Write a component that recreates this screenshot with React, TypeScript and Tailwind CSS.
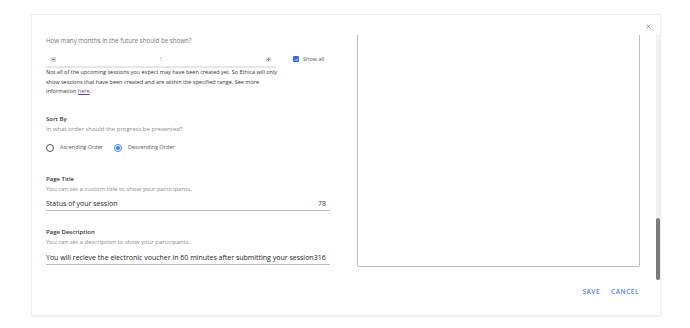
import React from 'react';

const font = { fontFamily: '"Open Sans", "Noto Sans", sans-serif' };

const Radio = ({ checked, label }: { checked?: boolean; label: string }) => (
  <label className="flex items-center gap-[6px]">
    <span
      className={`w-[8px] h-[8px] rounded-full border flex items-center justify-center ${
        checked ? 'border-[#3b82f6]' : 'border-[#555]'
      }`}
    >
      {checked && <span className="w-[4px] h-[4px] rounded-full bg-[#3b82f6]" />}
    </span>
    <span className="text-[5.5px] text-[#555]">{label}</span>
  </label>
);

const Field = ({ title, hint, value, count, last }: { title: string; hint: string; value: string; count?: string; last?: boolean }) => (
  <div className={last ? 'mt-[16px]' : 'mt-[20px]'}>
    <div className="text-[6px] leading-[10px] font-semibold text-[#333]">{title}</div>
    <div className="text-[6px] leading-[10px] text-[#8a8a8a]">{hint}</div>
    <div className={`flex items-end justify-between border-b border-[#bdbdbd] ${last ? 'h-[18px]' : 'h-[17px]'}`}>
      <span className="text-[7px] leading-[12px] text-[#222]">{value}</span>
      {count && <span className="text-[7px] leading-[12px] text-[#444] pr-[4px]">{count}</span>}
    </div>
  </div>
);

export default function App() {
  return (
    <div className="w-[690px] h-[328px] bg-white pl-[31px] pt-[14px]" style={font}>
      <div className="w-[630px] h-[302px] bg-white border border-[#eeeeee] shadow-[0_1px_2px_rgba(0,0,0,0.05)] flex flex-col">
        <div className="h-[20px] flex justify-end items-center pr-[9px]">
          <svg width="5" height="5" viewBox="0 0 10 10" className="mt-[2px]">
            <path d="M1 1L9 9M9 1L1 9" stroke="#8a8a8a" strokeWidth="1.6" />
          </svg>
        </div>
        <div className="h-[245px] flex">
          <div className="flex-1 overflow-hidden flex gap-[27px] pl-[14px] pr-[16px]">
            <div className="w-[284px] pb-[13px]">
              <div className="text-[6.2px] leading-[12px] text-[#777]">How many months in the future should be shown?</div>
              <div className="flex items-start">
                <div className="w-[230px] h-[21px] border-b-2 border-[#e6e6e6] flex items-end justify-between pb-[4px] px-[5px]">
                  <span className="w-[5px] h-[5px] bg-[#d9d9d9] flex items-center justify-center">
                    <span className="w-[3px] h-[1px] bg-[#888]" />
                  </span>
                  <span className="text-[6px] leading-[8px] text-[#aaa] -mb-[1px]">1</span>
                  <span className="w-[5px] h-[5px] bg-[#e2e2e2] relative flex items-center justify-center">
                    <span className="w-[3px] h-[1px] bg-[#888]" />
                    <span className="absolute w-[1px] h-[3px] bg-[#888]" />
                  </span>
                </div>
                <label className="flex items-center gap-[4px] ml-[17px] mt-[8px]">
                  <span className="w-[6px] h-[6px] rounded-[1px] bg-[#2f6fde] flex items-center justify-center">
                    <svg width="5" height="5" viewBox="0 0 10 10">
                      <path d="M2 5.2L4.2 7.4L8.2 2.8" stroke="white" strokeWidth="1.6" fill="none" />
                    </svg>
                  </span>
                  <span className="text-[5.5px] text-[#555]">Show all</span>
                </label>
              </div>
              <p className="w-[232px] text-[5.5px] leading-[9.5px] text-[#333]">
                Not all of the upcoming sessions you expect may have been created yet. So Ethica will only show sessions that have been created and are within the specified range. See more information{' '}
                <span className="text-[#6b3fa0] underline">here</span>.
              </p>

              <div className="mt-[17px]">
                <div className="text-[6px] leading-[10px] font-semibold text-[#333]">Sort By</div>
                <div className="text-[6px] leading-[10px] text-[#8a8a8a]">In what order should the progress be presented?</div>
                <div className="flex items-center gap-[11px] mt-[8px] h-[12px]">
                  <Radio label="Ascending Order" />
                  <Radio checked label="Descending Order" />
                </div>
              </div>

              <Field title="Page Title" hint="You can set a custom title to show your participants." value="Status of your session" count="78" />
              <Field
                last
                title="Page Description"
                hint="You can set a description to show your participants."
                value="You will recieve the electronic voucher in 60 minutes after submitting your session316"
              />
            </div>
            <div className="flex-1 mb-[13px] border-x border-b border-[#bdbdbd] rounded-b-[2px]" />
          </div>
          <div className="w-[4px] bg-[#f1f1f1] flex flex-col justify-end">
            <div className="h-[62px] bg-[#7a7a7a] rounded-[2px]" />
          </div>
        </div>
        <div className="flex-1 flex justify-end items-start gap-[11px] pr-[21px] pt-[8px]">
          <button className="text-[6.5px] leading-[8px] font-semibold tracking-[0.08em] text-[#4a86e8]">SAVE</button>
          <button className="text-[6.5px] leading-[8px] font-semibold tracking-[0.08em] text-[#4a86e8]">CANCEL</button>
        </div>
      </div>
    </div>
  );
}
